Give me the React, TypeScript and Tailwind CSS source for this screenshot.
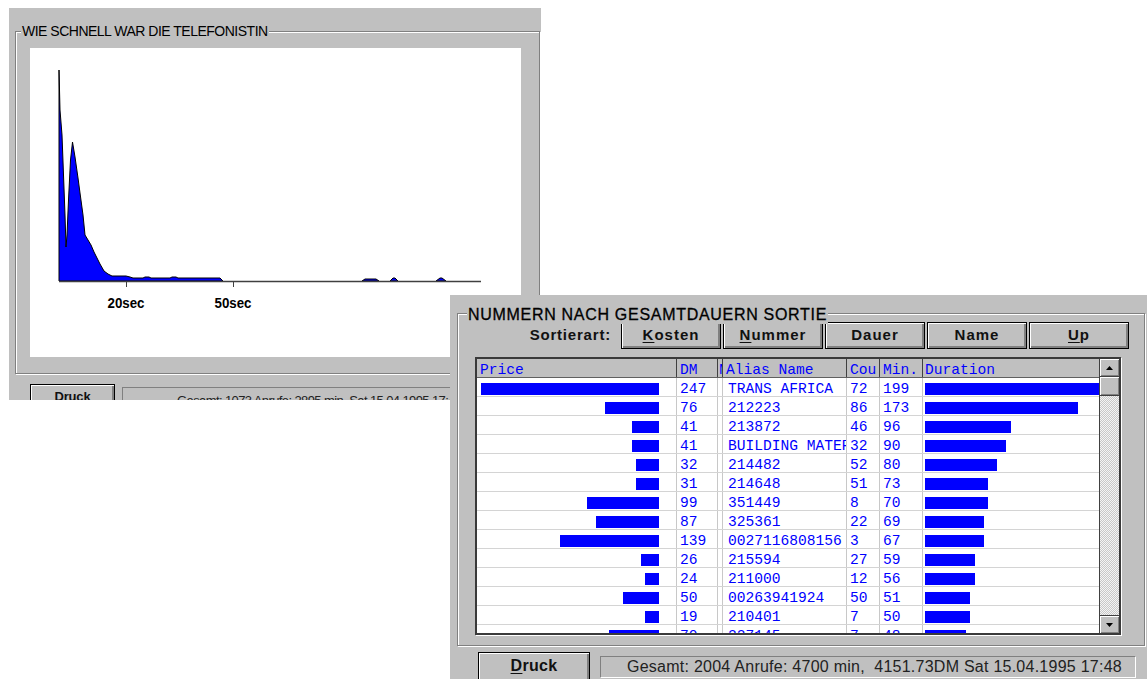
import React from "react";

const SANS = "font-['Liberation_Sans',Arial,sans-serif]";
const MONO = "font-['Liberation_Mono','Courier_New',monospace]";

// histogram outline, in chart-local coordinates
const PEAKS =
  "29,233 29,22 30,62 32,87 33.5,127 35,167 36,199 37,187 38.5,152 40.5,112 42.5,94 45,109 48,130 50,145 53,167 55,187 58,192 61,197 64,204 67,210 70,216 74,223 78,226 82,228 96,228 100,229 103,230 113,230 115,229 119,229 121,230 140,230 142,229 146,229 148,230 190,230 193,233";

const BUMPS = [
  "332,233 335,231 346,231 349,233",
  "360,233 363,230 365,230 368,233",
  "406,233 410,230 412,230 416,233",
];

type Row = { dm: number; price: number; alias: string; cnt: number; min: number };

const ROWS: Row[] = [
  { dm: 247, price: 178, alias: "TRANS AFRICA", cnt: 72, min: 199 },
  { dm: 76, price: 54, alias: "212223", cnt: 86, min: 173 },
  { dm: 41, price: 27, alias: "213872", cnt: 46, min: 96 },
  { dm: 41, price: 27, alias: "BUILDING MATERIAL", cnt: 32, min: 90 },
  { dm: 32, price: 23, alias: "214482", cnt: 52, min: 80 },
  { dm: 31, price: 23, alias: "214648", cnt: 51, min: 73 },
  { dm: 99, price: 72, alias: "351449", cnt: 8, min: 70 },
  { dm: 87, price: 63, alias: "325361", cnt: 22, min: 69 },
  { dm: 139, price: 99, alias: "0027116808156", cnt: 3, min: 67 },
  { dm: 26, price: 18, alias: "215594", cnt: 27, min: 59 },
  { dm: 24, price: 14, alias: "211000", cnt: 12, min: 56 },
  { dm: 50, price: 36, alias: "00263941924", cnt: 50, min: 51 },
  { dm: 19, price: 14, alias: "210401", cnt: 7, min: 50 },
  { dm: 70, price: 50, alias: "227145", cnt: 7, min: 48 },
];

// duration bars step in 5-minute blocks
const durWidth = (m: number) => Math.floor(m / 5) * 4.5;

function WaitChart() {
  return (
    <svg width={491} height={309} className="block">
      <polygon points={PEAKS} fill="#0000ff" stroke="#000" strokeWidth={1} strokeLinejoin="round" />
      {BUMPS.map((p) => (
        <polygon key={p} points={p} fill="#0000ff" stroke="#000" strokeWidth={1} />
      ))}
      <line x1={29} y1={233.5} x2={451} y2={233.5} stroke="#404040" strokeWidth={1.5} />
      <line x1={96.5} y1={233} x2={96.5} y2={239} stroke="#404040" strokeWidth={1} />
      <line x1={203.5} y1={233} x2={203.5} y2={239} stroke="#404040" strokeWidth={1} />
      <text x={96} y={260} textAnchor="middle" fontFamily="Liberation Sans, Arial, sans-serif" fontWeight={700} fontSize={15} textLength={37} lengthAdjust="spacingAndGlyphs" fill="#000">
        20sec
      </text>
      <text x={203} y={260} textAnchor="middle" fontFamily="Liberation Sans, Arial, sans-serif" fontWeight={700} fontSize={15} textLength={37} lengthAdjust="spacingAndGlyphs" fill="#000">
        50sec
      </text>
    </svg>
  );
}

function Arrow({ up }: { up?: boolean }) {
  return (
    <svg width={7} height={4} className="block">
      <polygon points={up ? "3.5,0 7,4 0,4" : "0,0 7,0 3.5,4"} fill="#000" />
    </svg>
  );
}

function ScrollBar() {
  return (
    <div className="flex w-[20px] shrink-0 flex-col border-l border-[#404040]">
      <div className="flex h-[18px] items-center justify-center border-b border-[#404040] bg-[#c0c0c0] shadow-[inset_1px_1px_0_#fff,inset_-1px_-1px_0_#808080]">
        <Arrow up />
      </div>
      <div className="h-[19px] border-b border-[#404040] bg-[#c0c0c0] shadow-[inset_1px_1px_0_#fff,inset_-1px_-1px_0_#808080]" />
      <div className="flex-1 bg-[repeating-conic-gradient(#c8c8c8_0_25%,#f4f4f4_0_50%)] bg-[length:2px_2px]" />
      <div className="flex h-[18px] items-center justify-center border-t border-[#404040] bg-[#c0c0c0] shadow-[inset_1px_1px_0_#fff,inset_-1px_-1px_0_#808080]">
        <Arrow />
      </div>
    </div>
  );
}

function HeadCell({ w, children }: { w: string; children?: React.ReactNode }) {
  return (
    <div className={`${w} shrink-0 overflow-hidden whitespace-nowrap border-r border-[#404040] pl-[3px] pt-[4px] leading-[14px]`}>
      {children}
    </div>
  );
}

const CELL = "shrink-0 border-r border-[#c8c8c8] pt-[4px] leading-[14px]";

function CallTable() {
  return (
    <div className={`ml-[17px] mt-[8px] flex h-[278px] w-[646px] border-2 border-[#3a3a3a] bg-white shadow-[1px_1px_0_#fff] ${MONO} text-[14.6px] text-[#0000ff]`}>
      <div className="flex w-[622px] shrink-0 flex-col overflow-hidden">
        <div className="flex h-[19px] shrink-0 border-b border-[#606060] bg-[#c0c0c0]">
          <HeadCell w="w-[200px]">Price</HeadCell>
          <HeadCell w="w-[41px]">DM</HeadCell>
          <div className="w-[5px] shrink-0 overflow-hidden border-r border-[#404040] pl-[1px] pt-[4px] leading-[14px]">Nr</div>
          <HeadCell w="w-[124px]">Alias Name</HeadCell>
          <HeadCell w="w-[33px]">Cou</HeadCell>
          <HeadCell w="w-[43px]">Min.</HeadCell>
          <div className="w-[176px] shrink-0 pl-[2px] pt-[4px] leading-[14px]">Duration</div>
        </div>
        {ROWS.map((r, i) => (
          <div key={i} className="flex h-[19px] shrink-0 border-b border-[#d4d4d4]">
            <div className="flex w-[200px] shrink-0 justify-end border-r border-[#c8c8c8] pr-[17px]">
              <div className="mt-[5px] h-[12px] bg-[#0000ff]" style={{ width: r.price }} />
            </div>
            <div className={`w-[41px] pl-[3px] ${CELL}`}>{r.dm}</div>
            <div className="w-[5px] shrink-0 border-r border-[#c8c8c8]" />
            <div className={`w-[124px] overflow-hidden whitespace-nowrap pl-[5px] ${CELL}`}>{r.alias}</div>
            <div className={`w-[33px] pl-[3px] ${CELL}`}>{r.cnt}</div>
            <div className={`w-[43px] pl-[3px] ${CELL}`}>{r.min}</div>
            <div className="w-[176px] shrink-0 overflow-hidden pl-[2px]">
              <div className="mt-[5px] h-[12px] bg-[#0000ff]" style={{ width: durWidth(r.min) }} />
            </div>
          </div>
        ))}
      </div>
      <ScrollBar />
    </div>
  );
}

function SortButton({ children }: { children: React.ReactNode }) {
  return (
    <button className="flex h-[27px] w-[100px] shrink-0 items-center justify-center border border-black bg-[#c0c0c0] text-[15px] font-bold tracking-[1px] text-[#111] shadow-[inset_1px_1px_0_#fff,inset_-2px_-2px_0_#808080]">
      {children}
    </button>
  );
}

export default function App() {
  return (
    <div className={`relative h-[679px] w-[1147px] overflow-hidden bg-white ${SANS}`}>
      {/* response-time histogram window */}
      <div className="absolute left-[9px] top-[8px] h-[392px] w-[532px] overflow-hidden bg-[#c0c0c0]">
        <div className="relative ml-[6px] mt-[23px] h-[343px] w-[525px] border border-[#808080] shadow-[inset_1px_1px_0_#fff,1px_1px_0_#fff]">
          <span className="absolute left-[5px] top-[-9px] bg-[#c0c0c0] px-[1px] text-[14px] leading-[16px] tracking-[-0.5px] text-black">
            WIE SCHNELL WAR DIE TELEFONISTIN
          </span>
          <div className="ml-[14px] mt-[16px] h-[309px] w-[491px] bg-white">
            <WaitChart />
          </div>
        </div>
        <div className="ml-[21px] mt-[10px] flex items-start gap-[7px]">
          <button className="h-[30px] w-[85px] shrink-0 border border-black bg-[#c0c0c0] pb-[4px] text-[13px] font-bold tracking-[-0.2px] text-[#111] shadow-[inset_1px_1px_0_#fff,inset_-2px_-2px_0_#808080]">
            Druck
          </button>
          <div className="mt-[3px] h-[22px] w-[420px] shrink-0 border border-b-white border-l-[#808080] border-r-white border-t-[#808080] pl-[54px] pt-[3px] text-[13px] tracking-[-0.6px] whitespace-nowrap text-[#222]">
            Gesamt: 1073 Anrufe: 2895 min&nbsp; Sat 15.04.1995 17:48
          </div>
        </div>
      </div>

      {/* numbers sorted by total duration window */}
      <div className="absolute left-[450px] top-[295px] h-[384px] w-[697px] overflow-hidden bg-[#c0c0c0]">
        <div className="relative ml-[7px] mt-[18px] h-[333px] w-[688px] border border-[#808080] shadow-[inset_1px_1px_0_#fff,1px_1px_0_#fff]">
          <span className="absolute left-[9px] top-[-8px] bg-[#c0c0c0] px-[1px] text-[16px] leading-[18px] tracking-[0.7px] text-black [-webkit-text-stroke:0.3px_#000]">
            NUMMERN NACH GESAMTDAUERN SORTIE
          </span>
          <div className="mt-[8px] flex items-center">
            <span className="w-[163px] shrink-0 pr-[10px] text-right text-[15px] font-bold tracking-[0.8px] text-[#111]">Sortierart:</span>
            <div className="flex shrink-0 gap-[2px]">
              <SortButton>
                <span className="underline underline-offset-[2px]">K</span>osten
              </SortButton>
              <SortButton>
                <span className="underline underline-offset-[2px]">N</span>ummer
              </SortButton>
              <SortButton>Dauer</SortButton>
              <SortButton>Name</SortButton>
              <SortButton>
                <span className="underline underline-offset-[2px]">U</span>p
              </SortButton>
            </div>
          </div>
          <CallTable />
        </div>
        <div className="ml-[28px] mt-[6px] flex items-start gap-[10px]">
          <button className="h-[30px] w-[112px] shrink-0 border border-black bg-[#c0c0c0] pb-[3px] text-[16px] font-bold tracking-[0.3px] text-[#111] shadow-[inset_1px_1px_0_#fff,inset_-2px_-2px_0_#808080]">
            <span className="underline underline-offset-[2px]">D</span>ruck
          </button>
          <div className="mt-[4px] h-[22px] w-[536px] shrink-0 border border-b-white border-l-[#808080] border-r-white border-t-[#808080] pl-[26px] text-[16px] leading-[20px] tracking-[0.25px] whitespace-nowrap text-[#222]">
            Gesamt: 2004 Anrufe: 4700 min,&nbsp; 4151.73DM Sat 15.04.1995 17:48
          </div>
        </div>
      </div>
    </div>
  );
}
